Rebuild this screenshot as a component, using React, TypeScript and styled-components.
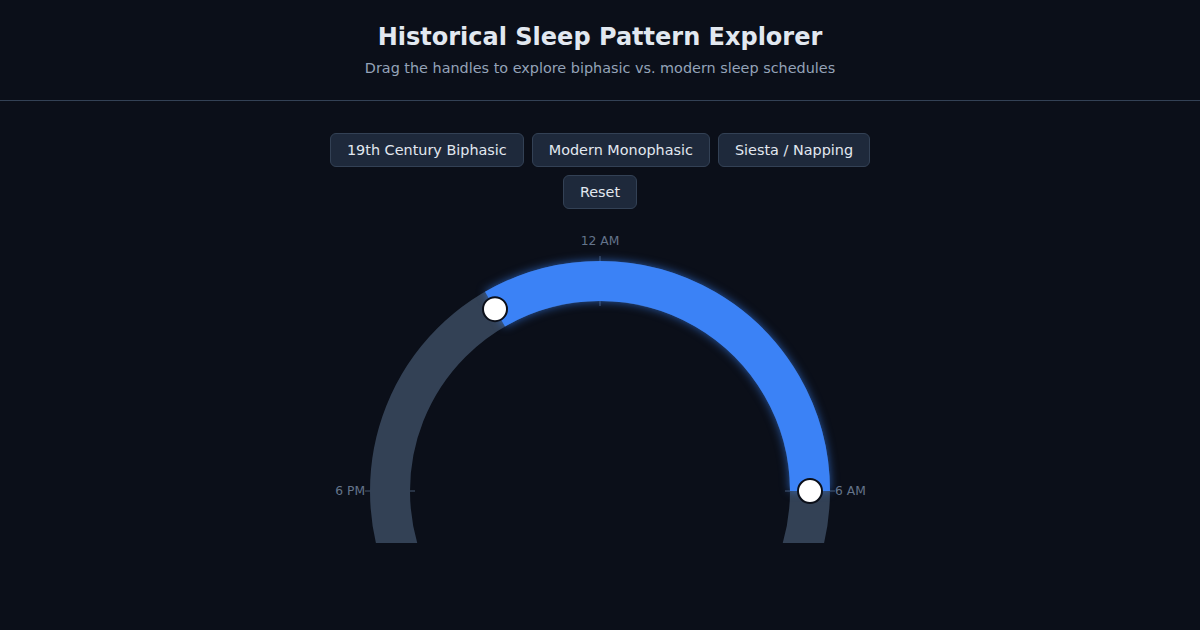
import React from "react";
import styled, { createGlobalStyle } from "styled-components";

const Global = createGlobalStyle`
  html, body { margin: 0; padding: 0; background: #0b0f19; }
  body { font-family: "DejaVu Sans", "Liberation Sans", sans-serif; color: #e2e8f0; }
`;

const Page = styled.div`
  width: 1200px;
  height: 630px;
  background: #0b0f19;
  display: flex;
  flex-direction: column;
  overflow: hidden;
`;

const Header = styled.header`
  display: flex;
  flex-direction: column;
  align-items: center;
  gap: 5px;
  padding: 21px 0 22px;
  border-bottom: 1px solid #334155;
`;

const Title = styled.h1`
  margin: 0;
  font-size: 24px;
  line-height: 32px;
  font-weight: 700;
  color: #e2e8f0;
`;

const Subtitle = styled.p`
  margin: 0;
  font-size: 14.4px;
  line-height: 20px;
  color: #94a3b8;
`;

const Main = styled.main`
  display: flex;
  flex-direction: column;
  align-items: center;
  padding-top: 32px;
  gap: 16px;
`;

const Presets = styled.div`
  width: 560px;
  display: flex;
  flex-wrap: wrap;
  justify-content: center;
  gap: 8px;
`;

const PresetButton = styled.button`
  height: 34px;
  padding: 0 16px;
  background: #1e293b;
  border: 1px solid #334155;
  border-radius: 6px;
  color: #e2e8f0;
  font-family: "DejaVu Sans", "Liberation Sans", sans-serif;
  font-size: 14.4px;
  cursor: pointer;
`;

const Dial = styled.svg`
  display: block;
  overflow: hidden;
`;

const TickLabel = styled.text`
  font-family: "DejaVu Sans", "Liberation Sans", sans-serif;
  font-size: 12.3px;
  fill: #64748b;
`;

const SleepArc = styled.path`
  filter: drop-shadow(0 0 5px rgba(59, 130, 246, 0.65));
`;

const W = 560;
const H = 318;
const CX = 280;
const CY = 266;
const R = 210;
const TRACK = 40;

// hour 0 = midnight at top, clockwise
const point = (hour: number, r: number) => {
  const a = (hour / 24) * Math.PI * 2;
  return { x: CX + r * Math.sin(a), y: CY - r * Math.cos(a) };
};

const arcPath = (from: number, to: number) => {
  const s = point(from, R);
  const e = point(to, R);
  let span = to - from;
  if (span < 0) span += 24;
  const large = span > 12 ? 1 : 0;
  return `M ${s.x} ${s.y} A ${R} ${R} 0 ${large} 1 ${e.x} ${e.y}`;
};

const ticks = [0, 6, 18];

const sleep = { start: 22, end: 6 };

export default function App() {
  const startPt = point(sleep.start, R);
  const endPt = point(sleep.end, R);
  return (
    <Page>
      <Global />
      <Header>
        <Title>Historical Sleep Pattern Explorer</Title>
        <Subtitle>Drag the handles to explore biphasic vs. modern sleep schedules</Subtitle>
      </Header>
      <Main>
        <Presets>
          <PresetButton>19th Century Biphasic</PresetButton>
          <PresetButton>Modern Monophasic</PresetButton>
          <PresetButton>Siesta / Napping</PresetButton>
          <PresetButton>Reset</PresetButton>
        </Presets>
        <Dial width={W} height={H} viewBox={`0 0 ${W} ${H}`}>
          {ticks.map((hour) => {
            const a = point(hour, R + TRACK / 2 + 5);
            const b = point(hour, R - TRACK / 2 - 5);
            return (
              <line key={hour} x1={a.x} y1={a.y} x2={b.x} y2={b.y} stroke="#334155" strokeWidth={1.5} />
            );
          })}
          <TickLabel x={CX} y={CY - 250 + 4} textAnchor="middle">12 AM</TickLabel>
          <TickLabel x={CX + 235} y={CY + 4} textAnchor="start">6 AM</TickLabel>
          <TickLabel x={CX - 235} y={CY + 4} textAnchor="end">6 PM</TickLabel>
          <circle cx={CX} cy={CY} r={R} fill="none" stroke="#334155" strokeWidth={TRACK} />
          <SleepArc d={arcPath(sleep.start, sleep.end)} fill="none" stroke="#3b82f6" strokeWidth={TRACK} />
          <circle cx={startPt.x} cy={startPt.y} r={12} fill="#ffffff" stroke="#0b0f19" strokeWidth={2} />
          <circle cx={endPt.x} cy={endPt.y} r={12} fill="#ffffff" stroke="#0b0f19" strokeWidth={2} />
        </Dial>
      </Main>
    </Page>
  );
}
